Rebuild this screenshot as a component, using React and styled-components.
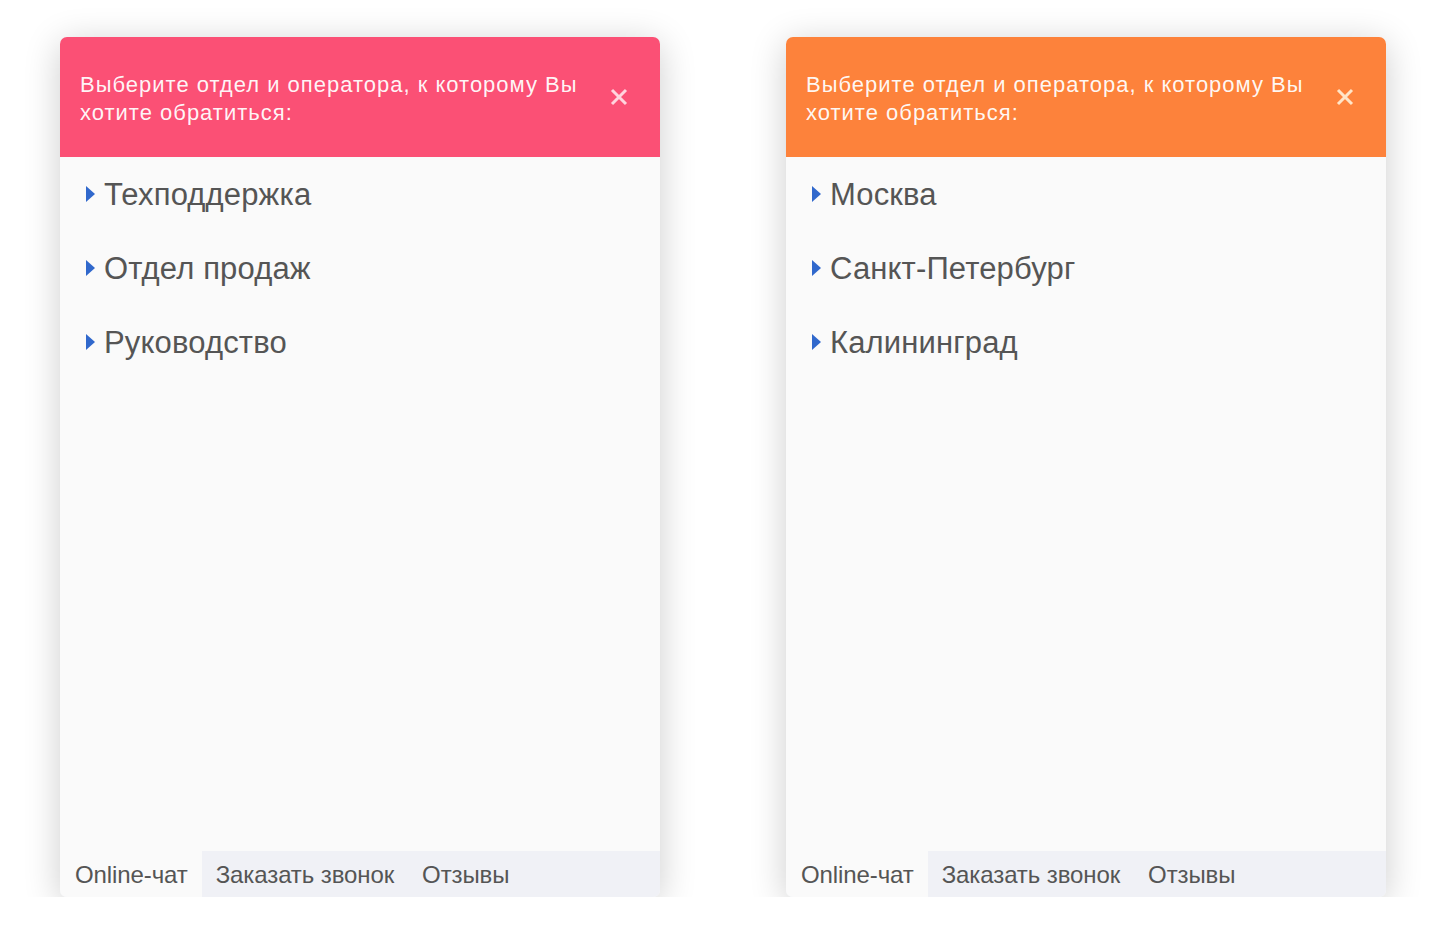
import React from "react";
import styled, { createGlobalStyle } from "styled-components";

const Global = createGlobalStyle`
  html, body { margin: 0; padding: 0; background: #ffffff; }
  body { font-family: "Liberation Sans", Arial, sans-serif; }
`;

const Page = styled.div`
  display: flex;
  gap: 126px;
  padding: 37px 0 0 60px;
`;

const Panel = styled.section`
  width: 600px;
  height: 860px;
  border-radius: 7px;
  overflow: hidden;
  background: #fafafa;
  box-shadow: 0 6px 36px rgba(0, 0, 0, 0.2);
  display: flex;
  flex-direction: column;
`;

const Header = styled.header`
  height: 120px;
  flex: none;
  background: ${(p) => p.$color};
  display: flex;
  align-items: center;
  padding: 4px 30px 0 20px;
  box-sizing: border-box;
  gap: 14px;
`;

const Title = styled.div`
  flex: 1;
  color: rgba(255, 255, 255, 0.95);
  font-size: 22px;
  letter-spacing: 1px;
  line-height: 28px;
`;

const Close = styled.button`
  border: 0;
  background: transparent;
  padding: 0;
  width: 22px;
  height: 22px;
  margin-top: -4px;
  display: flex;
  align-items: center;
  justify-content: center;
  color: ${(p) => p.$tint};
  cursor: pointer;
`;

const List = styled.ul`
  list-style: none;
  margin: 0;
  padding: 1px 0 0 26px;
  flex: 1;
`;

const Item = styled.li`
  height: 74px;
  display: flex;
  align-items: center;
  gap: 9px;
  font-size: 31px;
  letter-spacing: 0.15px;
  color: #555555;
`;

const Arrow = styled.span`
  width: 0;
  height: 0;
  border-top: 8px solid transparent;
  border-bottom: 8px solid transparent;
  border-left: 9px solid #3068cc;
  margin-top: -2px;
`;

const Tabs = styled.nav`
  height: 46px;
  flex: none;
  display: flex;
  background: #f0f1f6;
`;

const Tab = styled.div`
  display: flex;
  align-items: center;
  padding: 2px 14px 0;
  font-size: 24px;
  letter-spacing: -0.1px;
  color: #555555;
  background: ${(p) => (p.$active ? "#fafafa" : "transparent")};
  &:first-child { padding-left: 15px; padding-right: 14px; }
`;

const CloseIcon = () => (
  <svg width="18" height="18" viewBox="0 0 18 18">
    <path d="M2 2 L16 16 M16 2 L2 16" stroke="currentColor" strokeWidth="3" />
  </svg>
);

const Widget = ({ color, tint, items }) => (
  <Panel>
    <Header $color={color}>
      <Title>Выберите отдел и оператора, к которому Вы хотите обратиться:</Title>
      <Close $tint={tint} aria-label="Закрыть">
        <CloseIcon />
      </Close>
    </Header>
    <List>
      {items.map((t) => (
        <Item key={t}>
          <Arrow />
          {t}
        </Item>
      ))}
    </List>
    <Tabs>
      <Tab $active>Online-чат</Tab>
      <Tab>Заказать звонок</Tab>
      <Tab>Отзывы</Tab>
    </Tabs>
  </Panel>
);

export default function App() {
  return (
    <>
      <Global />
      <Page>
        <Widget
          color="#fb5075"
          tint="rgba(255,235,240,0.85)"
          items={["Техподдержка", "Отдел продаж", "Руководство"]}
        />
        <Widget
          color="#fd823b"
          tint="rgba(255,240,215,0.9)"
          items={["Москва", "Санкт-Петербург", "Калининград"]}
        />
      </Page>
    </>
  );
}
